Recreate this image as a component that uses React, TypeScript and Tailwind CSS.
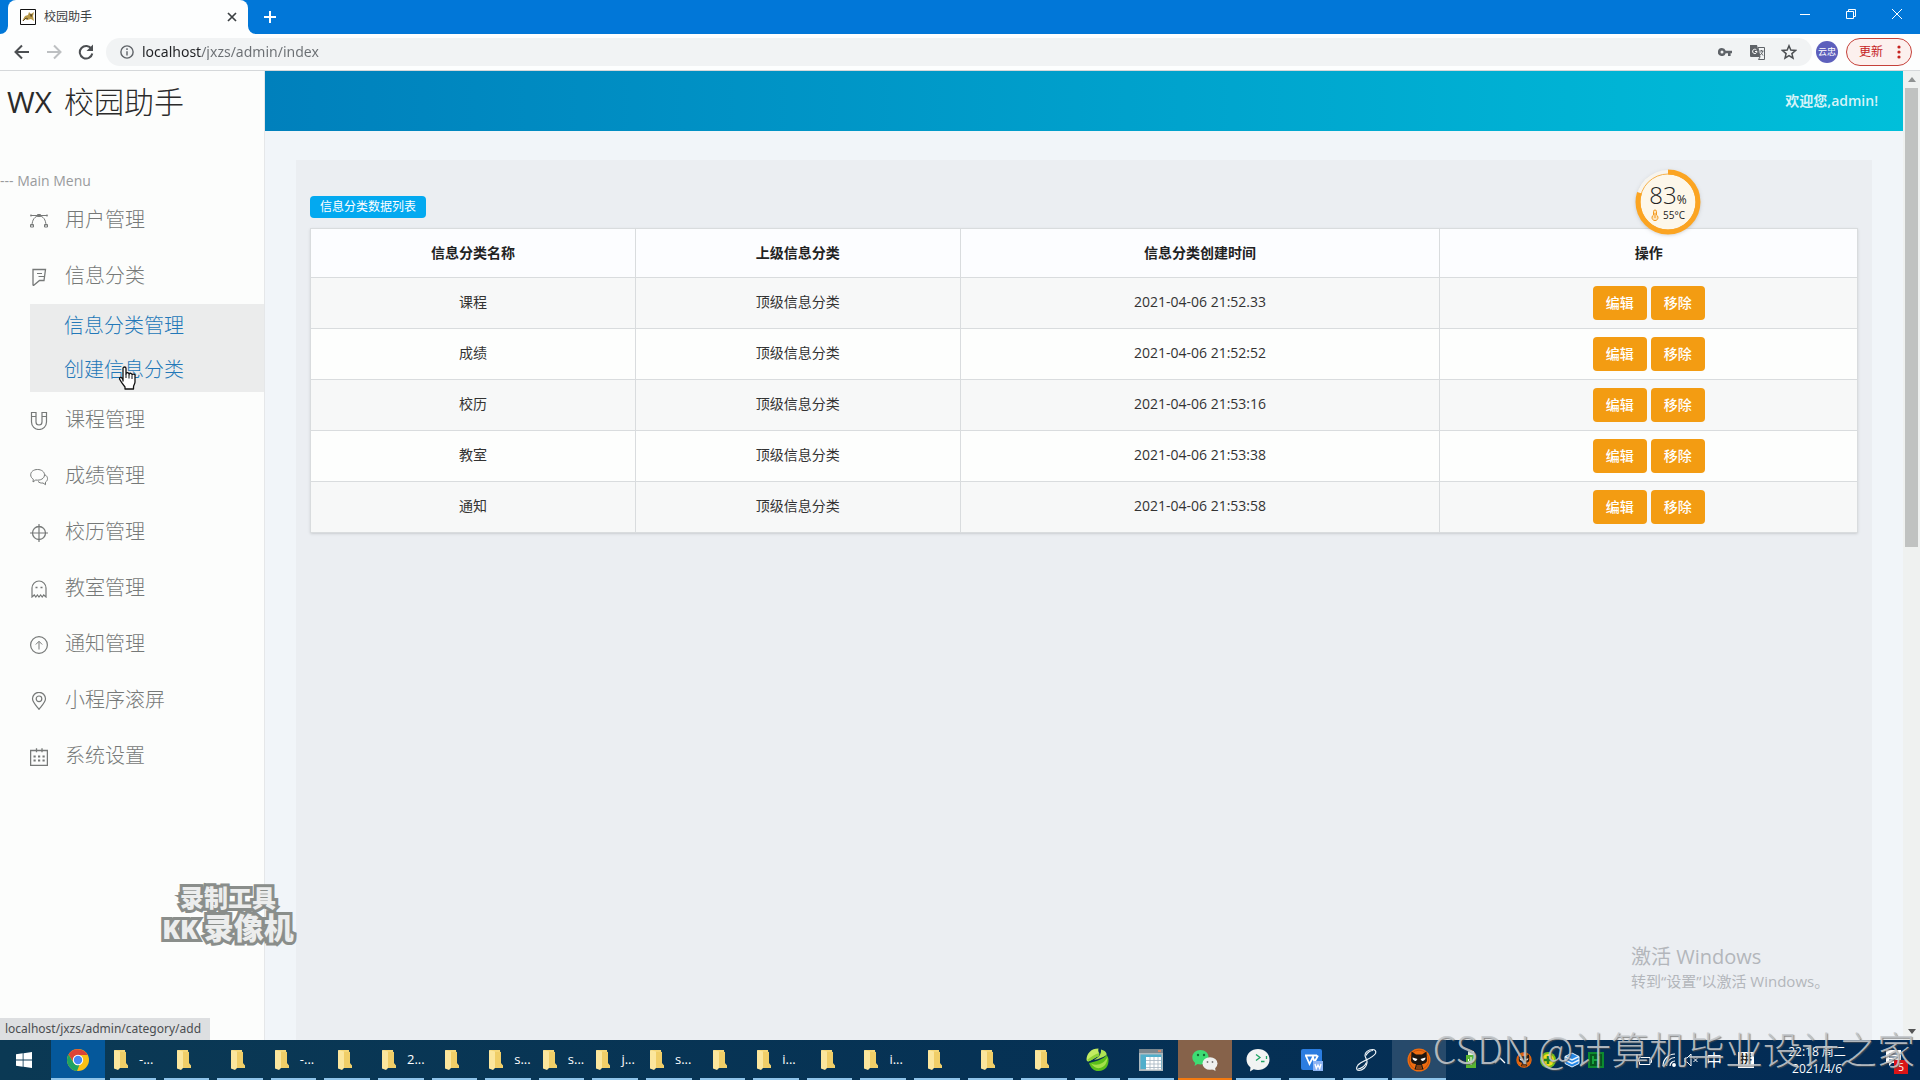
import React from "react";

type IconProps = { className?: string };

function Line({ children, className = "size-[18px]" }: { children: React.ReactNode; className?: string }) {
  return (
    <svg viewBox="0 0 18 18" className={className} fill="none" stroke="currentColor" strokeWidth="1" aria-hidden="true">
      {children}
    </svg>
  );
}

const VectorIcon = () => (
  <Line>
    <path d="M1 3.500h16M2 14C2 7.500 5 4 9 4s7 3.500 7 10" />
    <path d="M7.500 2.500h3v2h-3zM.5 12.500h3v2.500h-3zM14.500 12.500h3v2.500h-3z" />
    <circle cx="1" cy="3.500" r=".7" />
    <circle cx="17" cy="3.500" r=".7" />
  </Line>
);
const FlagIcon = () => (
  <Line>
    <path d="M3 1.500h12.500l-1.500 11H9.500L3.500 17.500 3 17z" strokeWidth="1.300" />
    <path d="M7 5.500h5M8.500 8.500h6" strokeWidth="1.200" />
  </Line>
);
const MagnetIcon = () => (
  <Line>
    <path d="M1.500.5h4.500v9.500a3 3 0 0 0 6 0V.5h4.500v9.500a7.500 7.500 0 0 1-15 0zM1.500 4.500h4.500M12 4.500h4.500" strokeWidth="1.200" />
  </Line>
);
const ChatIcon = () => (
  <Line>
    <path d="M7.500 1.500C3.500 1.500.7 3.800.7 6.800c0 2 1 3.400 2.600 4.400L3 14l2.700-2c4.800.8 8.800-1.500 8.800-5.200C14.500 3.800 11.500 1.500 7.500 1.500z" />
    <path d="M15 6.800c3.300 1.800 3.200 5.600.5 7.300v2.600l-2.500-1.700c-2 .3-3.800-.3-5-1.600" />
  </Line>
);
const TargetIcon = () => (
  <Line>
    <circle cx="9" cy="9" r="6.500" strokeWidth="1.300" />
    <path d="M9 0v18M0 9h18" strokeWidth="1.200" />
  </Line>
);
const GhostIcon = () => (
  <Line>
    <path d="M2 17V8a7 7 0 0 1 14 0v9l-2.300-2-1.500 2-1.600-2L9 17l-1.600-2-1.600 2-1.500-2z" strokeWidth="1.200" />
    <path d="M5.500 7.500h2M10.500 7.500h2" strokeWidth="1.500" />
  </Line>
);
const UpIcon = () => (
  <Line>
    <circle cx="9" cy="9" r="8.400" strokeWidth="1.200" />
    <path d="M9 13.500V5.500M5.800 8.500 9 5.300l3.200 3.200" />
  </Line>
);
const PinIcon = () => (
  <Line>
    <path d="M9 17.300C5.500 13 2.500 10 2.500 6.800a6.500 6.500 0 0 1 13 0c0 3.200-3 6.200-6.500 10.500z" strokeWidth="1.200" />
    <circle cx="9" cy="6.800" r="2.800" strokeWidth="1.200" />
  </Line>
);
const CalendarIcon = () => (
  <Line>
    <path d="M.6 2.500h16.800v14.800H.6zM6.500.3v4M12 .3v4" strokeWidth="1.300" />
    <path d="M3.500 8.500h2.200M8 8.500h2.200M12.500 8.500h2.200M3.500 12.500h2.200M8 12.500h2.200M12.500 12.500h2.200" strokeWidth="2" />
  </Line>
);

const menu = [
  { label: "用户管理", icon: <VectorIcon /> },
  { label: "信息分类", icon: <FlagIcon />, children: ["信息分类管理", "创建信息分类"] },
  { label: "课程管理", icon: <MagnetIcon /> },
  { label: "成绩管理", icon: <ChatIcon /> },
  { label: "校历管理", icon: <TargetIcon /> },
  { label: "教室管理", icon: <GhostIcon /> },
  { label: "通知管理", icon: <UpIcon /> },
  { label: "小程序滚屏", icon: <PinIcon /> },
  { label: "系统设置", icon: <CalendarIcon /> },
];

const rows = [
  ["课程", "2021-04-06 21:52.33"],
  ["成绩", "2021-04-06 21:52:52"],
  ["校历", "2021-04-06 21:53:16"],
  ["教室", "2021-04-06 21:53:38"],
  ["通知", "2021-04-06 21:53:58"],
];

function TitleBar() {
  return (
    <div className="flex h-[34px] shrink-0 items-end bg-[#0177d8] text-white">
      <div className="relative ml-2 flex h-full w-60 items-center rounded-t-lg bg-[#fdfefe] pr-[11px] pl-3 text-[#3c4043]">
        <svg viewBox="0 0 16 16" className="size-4" aria-hidden="true">
          <path d="M.5.5h15v15H.5z" fill="#fff" stroke="#111" />
          <path d="M2 12l3-5 3-1 1-3 2 2 3-2-1 4 1 5-3-2-4 1-2-1z" fill="#b99a4a" />
          <path d="M3 12l3-3 2 1M10 5l1 2M12 5l-1 3" stroke="#5d4a25" fill="none" />
        </svg>
        <span className="ml-2 flex-1 text-xs">校园助手</span>
        <button aria-label="关闭标签页">
          <svg viewBox="0 0 10 10" className="size-[10px]" stroke="#3c4043" strokeWidth="1.700" aria-hidden="true">
            <path d="M1 1l8 8M9 1 1 9" />
          </svg>
        </button>
        <svg viewBox="0 0 8 8" className="absolute bottom-0 -left-2 size-2" fill="#fdfefe" aria-hidden="true">
          <path d="M8 0v8H0a8 8 0 0 0 8-8z" />
        </svg>
        <svg viewBox="0 0 8 8" className="absolute -right-2 bottom-0 size-2" fill="#fdfefe" aria-hidden="true">
          <path d="M0 0v8h8a8 8 0 0 1-8-8z" />
        </svg>
      </div>
      <button aria-label="新标签页" className="flex h-full w-11 items-center justify-center">
        <svg viewBox="0 0 12 12" className="size-3" stroke="white" strokeWidth="2" aria-hidden="true">
          <path d="M6 0v12M0 6h12" />
        </svg>
      </button>
      <div className="ml-auto flex h-7 self-start">
        <button aria-label="最小化" className="flex w-[46px] items-center justify-center">
          <svg viewBox="0 0 10 10" className="size-[10px]" stroke="white" aria-hidden="true"><path d="M0 5.500h10" /></svg>
        </button>
        <button aria-label="还原" className="flex w-[46px] items-center justify-center">
          <svg viewBox="0 0 10 10" className="size-[10px]" fill="none" stroke="white" aria-hidden="true"><path d="M.5 2.500h7v7h-7zM2.500 2.500v-2h7v7h-2" /></svg>
        </button>
        <button aria-label="关闭" className="flex w-[46px] items-center justify-center">
          <svg viewBox="0 0 10 10" className="size-[10px]" stroke="white" aria-hidden="true"><path d="M0 0l10 10M10 0 0 10" /></svg>
        </button>
      </div>
    </div>
  );
}

function Toolbar() {
  return (
    <div className="flex h-[37px] shrink-0 items-center border-b border-[#d5d8da] bg-[#fdfefe] text-[#5f6368]">
      <button aria-label="后退" className="ml-[14px]">
        <svg viewBox="0 0 16 16" className="size-4" fill="none" stroke="#4c4f52" strokeWidth="2" aria-hidden="true"><path d="M15 8H2M8 1.500 1.500 8 8 14.500" /></svg>
      </button>
      <button aria-label="前进" className="ml-4">
        <svg viewBox="0 0 16 16" className="size-4" fill="none" stroke="#bdc0c2" strokeWidth="2" aria-hidden="true"><path d="M1 8h13M8 1.500 14.500 8 8 14.500" /></svg>
      </button>
      <button aria-label="重新加载" className="ml-4">
        <svg viewBox="0 0 16 16" className="size-4" fill="none" stroke="#4c4f52" strokeWidth="2" aria-hidden="true">
          <path d="M13.500 5A6.300 6.300 0 1 0 14.300 9.500" />
          <path d="M15 0.500V7H8.500z" fill="#4c4f52" stroke="none" />
        </svg>
      </button>
      <div className="ml-3 flex h-7 flex-1 items-center gap-2 rounded-full bg-[#f1f3f4] pr-[15px] pl-[14px]">
        <svg viewBox="0 0 16 16" className="size-[14px]" fill="none" stroke="#5f6368" strokeWidth="1.600" aria-hidden="true">
          <circle cx="8" cy="8" r="7" /><path d="M8 7v5M8 3.800v1.800" />
        </svg>
        <input
          aria-label="地址栏"
          readOnly
          value="localhost/jxzs/admin/index"
          className="h-[22px] min-w-0 flex-1 self-start bg-[linear-gradient(to_right,#202124_60px,#6b6f73_60px)] bg-clip-text pt-1 font-['Noto_Sans'] text-sm text-transparent outline-none"
        />
        <button aria-label="密码">
          <svg viewBox="0 0 14 8" className="h-2 w-[14px]" fill="#5f6368" aria-hidden="true">
            <path fillRule="evenodd" d="M4 0a4 4 0 1 0 3.700 5.200H10V8h2.600V5.200H14V2.700H7.700A4 4 0 0 0 4 0zm0 2.500a1.500 1.500 0 1 1 0 3 1.500 1.500 0 0 1 0-3z" />
          </svg>
        </button>
        <button aria-label="翻译" className="ml-[10px]">
          <svg viewBox="0 0 15 15" className="size-[15px]" aria-hidden="true">
            <path d="M0 0h7l3 12H1a1 1 0 0 1-1-1z" fill="#5f6368" />
            <path d="M8 2.500h6.500v12H8.500L10 12z" fill="none" stroke="#5f6368" />
            <path d="M6.500 5A2.200 2.200 0 1 0 7 6.500H5" fill="none" stroke="#fff" />
            <path d="M9.500 6h4M11.500 5v1M12.800 6c-.4 2-1.500 3-2.600 3.800M10.800 7.500l2.200 3" fill="none" stroke="#5f6368" />
          </svg>
        </button>
        <button aria-label="收藏" className="ml-2">
          <svg viewBox="0 0 16 16" className="size-4" fill="none" stroke="#4c4f52" strokeWidth="1.500" aria-hidden="true">
            <path d="M8 1.800l1.800 4.300 4.700.4-3.600 3.100 1.100 4.600L8 11.700l-4 2.500 1.100-4.600L1.500 6.500l4.700-.4z" />
          </svg>
        </button>
      </div>
      <button className="ml-1 flex size-[22px] items-center justify-center rounded-full bg-[#5c5fbc] text-[9px] whitespace-nowrap text-white">云忠</button>
      <button className="mr-2 ml-2 flex h-7 w-[66px] items-center justify-between rounded-full border border-[#c5413a] bg-[#fcf0ee] pr-[10px] pl-3 text-xs text-[#c5221f]">
        更新
        <svg viewBox="0 0 4 14" className="h-[14px] w-1" fill="#c5221f" aria-hidden="true">
          <circle cx="2" cy="2" r="1.600" /><circle cx="2" cy="7" r="1.600" /><circle cx="2" cy="12" r="1.600" />
        </svg>
      </button>
    </div>
  );
}

function HandCursor({ className }: IconProps) {
  return (
    <svg viewBox="0 0 18 24" className={className} fill="#fff" stroke="#111" strokeWidth="1.300" strokeLinejoin="round" aria-hidden="true">
      <path d="M5 15V2.500a1.500 1.500 0 0 1 3 0V8a1.500 1.500 0 0 1 3 .5 1.500 1.500 0 0 1 3 .7 1.500 1.500 0 0 1 3 1V16c0 2-1.500 3-1.500 5v2H7v-2c-2-2.500-4-5-5.500-8 0-2 1.500-2 2.500-1L5 14z" />
      <path d="M8 8v4M11 9v3.500M14 10v3" fill="none" strokeWidth="1" />
    </svg>
  );
}

function Sidebar() {
  return (
    <aside className="relative w-[265px] shrink-0 border-r border-[#e5e7e9] bg-[#fcfdfc] font-light">
      <h1 className="flex h-[60px] items-center pl-[7px] text-[30px] text-[#2b2b2b]">
        <span className="mr-3 font-normal">WX</span>校园助手
      </h1>
      <p className="mt-[39px] h-[22px] text-sm leading-[22px] font-normal text-[#999b9c]">--- Main Menu</p>
      <nav>
        <ul>
          {menu.map((item) => (
            <li key={item.label}>
              <a href="#" className="flex h-14 items-center pl-[30px] text-xl text-[#767978]">
                <span className="mt-[2px] mr-[17px]">{item.icon}</span>
                {item.label}
              </a>
              {item.children && (
                <ul className="ml-[30px] bg-[#ebecec]">
                  {item.children.map((c) => (
                    <li key={c}>
                      <a href="#" className="flex h-11 items-center pl-[34px] text-xl text-[#2378b8]">{c}</a>
                    </li>
                  ))}
                </ul>
              )}
            </li>
          ))}
        </ul>
      </nav>
      <HandCursor className="absolute top-[295px] left-[118px] h-6 w-[18px]" />
      <div className="pointer-events-none absolute right-[-32px] bottom-[95px] w-[136px] text-center font-black whitespace-nowrap text-[#eceded] [paint-order:stroke] [-webkit-text-stroke:6px_#8a8e8b]">
        <div className="text-2xl leading-7">录制工具</div>
        <div className="text-[30px] leading-8"><span className="mr-[6px] text-[26px]">KK</span>录像机</div>
      </div>
    </aside>
  );
}

const actionClass = "h-[34px] w-[54px] rounded bg-[#f39c12] text-sm font-medium text-white";
const cellClass = "border border-[#d9dcde] pb-[2px]";

function CategoryTable() {
  return (
    <table className="mt-[10px] w-full table-fixed border-collapse border border-[#d9dcde] text-center text-sm text-[#333] shadow-sm">
      <colgroup>
        <col className="w-[21%]" />
        <col className="w-[21%]" />
        <col className="w-[31%]" />
        <col className="w-[27%]" />
      </colgroup>
      <thead>
        <tr className="h-[49px] bg-[#fcfdff] text-[#222]">
          {["信息分类名称", "上级信息分类", "信息分类创建时间", "操作"].map((h) => (
            <th key={h} className="border border-[#d9dcde] font-bold">{h}</th>
          ))}
        </tr>
      </thead>
      <tbody>
        {rows.map(([name, time]) => (
          <tr key={name} className="h-[51px] bg-[#fdfefd] odd:bg-[#f7f8f8]">
            <td className={cellClass}>{name}</td>
            <td className={cellClass}>顶级信息分类</td>
            <td className={cellClass}>{time}</td>
            <td className="border border-[#d9dcde]">
              <div className="flex justify-center gap-1">
                <button className={actionClass}>编辑</button>
                <button className={actionClass}>移除</button>
              </div>
            </td>
          </tr>
        ))}
      </tbody>
    </table>
  );
}

function Gauge() {
  return (
    <div className="absolute top-[169px] right-[219px] size-[66px]">
      <svg viewBox="0 0 66 66" className="size-full drop-shadow" fill="none" aria-hidden="true">
        <circle cx="33" cy="33" r="32" fill="#f7f4ee" />
        <circle cx="33" cy="33" r="28" fill="#fdf7ea" stroke="#f6b24c" strokeWidth="1" />
        <circle cx="33" cy="33" r="30" stroke="#fba422" strokeWidth="5" pathLength="100" strokeDasharray="80 20" transform="rotate(-90 33 33)" />
      </svg>
      <div className="absolute inset-0 flex flex-col items-center pt-[12px] text-[#222]">
        <div className="flex items-baseline text-2xl leading-7 font-light">83<span className="text-xs font-normal">%</span></div>
        <div className="flex items-center gap-1 text-[10px] leading-3">
          <svg viewBox="0 0 8 12" className="h-3 w-2" fill="#fde3b8" stroke="#f39a1e" aria-hidden="true">
            <path d="M2.500 6V2.500a1.500 1.500 0 0 1 3 0V6a3 3 0 1 1-3 0zM4 4v5" />
          </svg>
          55°C
        </div>
      </div>
    </div>
  );
}

function Scrollbar() {
  return (
    <div className="flex w-[17px] shrink-0 flex-col items-center bg-[#eff1f0] pt-[6px] pb-[6px]">
      <svg viewBox="0 0 8 5" className="h-[5px] w-2 shrink-0" fill="#8f9292" aria-hidden="true"><path d="M4 0l4 5H0z" /></svg>
      <div className="mt-[6px] h-[48%] w-[13px] bg-[#c0c2c1]" />
      <svg viewBox="0 0 8 5" className="mt-auto h-[5px] w-2 shrink-0" fill="#555" aria-hidden="true"><path d="M4 5 0 0h8z" /></svg>
    </div>
  );
}

const FolderIcon = () => (
  <svg viewBox="0 0 14 20" className="h-5 w-[14px] shrink-0" aria-hidden="true">
    <path d="M1 0h10l1 14 2 1.500V18H1z" fill="#f5d778" />
    <path d="M6 2h6v11l1.500 2v3H6z" fill="#f0ce68" />
    <path d="M0 0l6 1.500V18l-2 2-4-1.500z" fill="#fbe69d" />
  </svg>
);
const ChromeIcon = () => (
  <svg viewBox="0 0 24 24" className="size-6" aria-hidden="true">
    <circle cx="12" cy="12" r="11" fill="#fbc116" />
    <path d="M2.500 6.500A11 11 0 0 1 21.600 7H12a5 5 0 0 0-4.800 6.400z" fill="#dc4437" />
    <path d="M2.500 6.500l5 8A5 5 0 0 0 13.500 16.800L11 23A11 11 0 0 1 2.500 6.500z" fill="#1da362" />
    <circle cx="12" cy="12" r="5.200" fill="#fff" />
    <circle cx="12" cy="12" r="4.200" fill="#4587f3" />
  </svg>
);
const LeafIcon = () => (
  <svg viewBox="0 0 24 24" className="size-6" aria-hidden="true">
    <path d="M3 15C5 21 9 23.500 13 23c6 0 10-5 9.500-11.500-.2-2-1-3.500-2-4.500-3 4-9 6-17.500 8z" fill="#5cbf1b" />
    <path d="M5 15.500c6 3 13 .5 16.500-6.500 0 6-3 10-7.500 11-4 .8-7-1.500-9-4.500z" fill="#a4e04a" />
    <path d="M.500 11C1 5.500 5 .5 12.500.5 11.500 4 14 4.500 13 8 9 9 6 12.500 2.500 13.500c-1.300.3-2-1-2-2.500z" fill="#c3ec62" />
    <path d="M2.500 13c4-.5 6.500-4 10.500-5l.3-3C9 6 5 9 1 12z" fill="#8ed436" />
    <path d="M15 1.500c4 1 6 3 5.500 5.500C17 9.500 12.500 11 8 12c4-2.500 7.500-5 7-10.500z" fill="#b0e454" />
  </svg>
);
const SheetIcon = () => (
  <svg viewBox="0 0 24 24" className="size-6" aria-hidden="true">
    <path d="M0 1h24v22H0z" fill="#aeb8bd" />
    <path d="M0 1h24v4H0z" fill="#7d888f" />
    <path d="M19 2h3v2h-3z" fill="#d5896c" />
    <path d="M1.500 6.500h21V21h-21z" fill="#51aecb" />
    <path d="M7 9h15v12.500H7z" fill="#fff" />
    <path d="M7 12.500h15M7 16h15M7 19.500h15M11 9v12.500M15 9v12.500M19 9v12.500" stroke="#a5b4c2" strokeWidth=".8" />
  </svg>
);
const WeChatIcon = () => (
  <svg viewBox="0 0 26 24" className="h-6 w-[26px]" aria-hidden="true">
    <path d="M8.500 2C13 2 16.500 5 16.500 9s-3.500 7.500-8 7.500c-1 0-2-.1-3-.4L2.500 18l.7-3C1.500 13.500.3 11.500.3 9.200.3 5.200 4 2 8.500 2z" fill="#3ddc73" />
    <ellipse cx="18" cy="15.500" rx="7.500" ry="6.300" fill="#eef0ef" />
    <path d="M20 21l3.500 2-.5-4z" fill="#eef0ef" />
    <circle cx="6" cy="7" r="1.200" fill="#146b35" /><circle cx="12" cy="7" r="1.200" fill="#146b35" />
    <circle cx="15.500" cy="14" r=".9" fill="#777" /><circle cx="20.500" cy="14" r=".9" fill="#777" />
  </svg>
);
const DevChatIcon = () => (
  <svg viewBox="0 0 24 24" className="size-6" fill="none" aria-hidden="true">
    <path d="M12 1c6.500 0 11.500 4.500 11.500 10.500S18.500 22 12 22c-1.500 0-3-.2-4.300-.7L4 23.500l.5-4C2 17.500.5 14.800.5 11.500.5 5.500 5.500 1 12 1z" fill="#f2f4f3" />
    <path d="M10 6.500l4 3-4 3M15 13.500h3.500M20.500 8v3" stroke="#1fa463" strokeWidth="1.300" />
  </svg>
);
const WpsIcon = () => (
  <svg viewBox="0 0 24 24" className="size-6" fill="none" aria-hidden="true">
    <rect x="1" y="1" width="21" height="21" rx="2" fill="#2b7de1" />
    <path d="M5 7.500h12M6 8l3.500 8L13 9l1.500 5L18 7.500" stroke="#fff" strokeWidth="1.800" />
    <path d="M13 13h10v10H13z" fill="#8db4f4" />
    <path d="M15 16l1.300 4.500L18 17l1.700 3.500L21 16" stroke="#fff" strokeWidth="1.300" />
  </svg>
);
const LoopIcon = () => (
  <svg viewBox="0 0 22 24" className="h-6 w-[22px]" fill="none" stroke="#eef4f8" strokeWidth="1.200" aria-hidden="true">
    <path d="M20.500 5.500c1-2.500-.5-4-3-4-4 0-8 3-7.500 6 .3 2.500 2.500 4 2 7.500-.5 4-4.500 7.500-8 7.500-3 0-3-3-1-5.500 4-4.500 14-6 17.500-11.500z" />
    <path d="M11 7.500c1-2.500 4-5 7-5M3 21c3 0 7-3 8.500-6.500" />
  </svg>
);
const CatIcon = ({ className = "size-6" }: IconProps) => (
  <svg viewBox="0 0 24 24" className={className} aria-hidden="true">
    <circle cx="12" cy="12" r="11.500" fill="#ef6d10" />
    <circle cx="12" cy="12" r="9.800" fill="none" stroke="#c9540a" />
    <path d="M4.500 3.500L9 6.500h6l4.500-3 .5 8.500c0 3-3 4-5 4l1.500 5.500h-9L9 16c-2 0-5-1-5-4z" fill="#1d1712" />
    <path d="M5.500 9.500l5 1.500-1.500 2c-2 0-3.500-1.500-3.500-3.500zM18.500 9.500l-5 1.500 1.500 2c2 0 3.500-1.500 3.500-3.500z" fill="#fff" />
    <path d="M9.500 18h5M9 20h6" stroke="#ef6d10" />
  </svg>
);

type Task = { label?: string; icon?: React.ReactNode; look?: "active" | "lit" };
const tasks: Task[] = [
  { label: "-..." }, {}, {}, { label: "-..." }, {}, { label: "2..." }, {}, { label: "s..." }, { label: "s..." },
  { label: "j..." }, { label: "s..." }, {}, { label: "i..." }, {}, { label: "i..." }, {}, {}, {},
  { icon: <LeafIcon /> }, { icon: <SheetIcon /> }, { icon: <WeChatIcon />, look: "active" }, { icon: <DevChatIcon /> },
  { icon: <WpsIcon /> }, { icon: <LoopIcon /> }, { icon: <CatIcon />, look: "lit" },
];

function Taskbar() {
  return (
    <footer className="flex h-10 shrink-0 bg-linear-to-r from-[#0b3954] to-[#032b55] text-white">
      <button aria-label="开始" className="flex w-[51px] items-center justify-center pr-[3px]">
        <svg viewBox="0 0 16 16" className="size-4" fill="#fff" aria-hidden="true">
          <path d="M0 2.200 6.700 1.300v6.300H0zM7.500 1.200 16 0v7.600H7.500zM0 8.400h6.700v6.300L0 13.800zM7.500 8.400H16V16l-8.500-1.200z" />
        </svg>
      </button>
      <button aria-label="Chrome" className="flex w-[54px] items-center justify-center border-b-2 border-[#8fc4ea] bg-[#05589b] pt-[2px]"><ChromeIcon /></button>
      <div className="ml-px grid min-w-0 flex-1 grid-cols-[repeat(25,minmax(0,1fr))]">
        {tasks.map((t, i) => {
          const look = t.look === "active" ? "bg-[#86624a]" : t.look === "lit" ? "bg-[#274a6b]" : "";
          const bar = t.look === "active" ? "border-[#f57a10]" : t.look === "lit" ? "border-[#8fc4ea]" : "mx-1 border-[#8fc4ea]";
          const place = t.label ? "gap-[11px] pl-1" : t.icon ? "justify-center" : "justify-center pr-1";
          return (
            <button key={i} aria-label={t.label ? undefined : "任务 " + (i + 1)} className={look}>
              <span className={"flex h-10 items-center border-b-2 pt-[2px] text-[13px] " + bar + " " + place}>
                {t.icon ?? <FolderIcon />}
                {t.label}
              </span>
            </button>
          );
        })}
      </div>
      <div className="flex w-[474px] items-center pl-[19px]">
        <svg viewBox="0 0 12 18" className="h-[18px] w-3" aria-hidden="true">
          <path d="M3 0h6v4H3z" fill="#e5eee0" /><path d="M1 4h10v13H1z" fill="#58b531" />
          <path d="M6 6v8M3.500 8v2L6 12l2.500-2V8" fill="none" stroke="#fff" />
        </svg>
        <svg viewBox="0 0 12 8" className="ml-[17px] h-2 w-3" fill="none" stroke="#fff" strokeWidth="1.300" aria-hidden="true"><path d="M1 7l5-5 5 5" /></svg>
        <CatIcon className="ml-[10px] size-4" />
        <svg viewBox="0 0 16 16" className="ml-2 size-4" aria-hidden="true">
          <circle cx="8" cy="8" r="8" fill="#79c31c" /><circle cx="8" cy="8" r="6" fill="#f6dd21" /><path d="M8 4v8M4 8h8" stroke="#27871c" strokeWidth="2.500" />
        </svg>
        <svg viewBox="0 0 16 16" className="ml-2 size-4" aria-hidden="true">
          <path d="M8 1l7 3.500v7L8 15l-7-3.500v-7z" fill="#2487e6" stroke="#e7f2fc" /><path d="M1 4.500 8 8l7-3.500M1 8l7 3.500L15 8" fill="none" stroke="#e7f2fc" strokeWidth="1.400" />
        </svg>
        <svg viewBox="0 0 16 16" className="ml-2 size-4" fill="none" aria-hidden="true">
          <path d="M1 1h14v14H1z" fill="#06561d" stroke="#0d8a2f" strokeWidth="2" /><path d="M5 4v8M11 4v8M5 8h6" stroke="#17a33d" strokeWidth="2" />
        </svg>
        <svg viewBox="0 0 16 14" className="ml-8 h-[14px] w-4" fill="none" stroke="#fff" aria-hidden="true">
          <path d="M5 4.500h9v7H3.500V8M14.500 6.500h1v3h-1M1 1v4h3V1M2.500 5v4" />
        </svg>
        <svg viewBox="0 0 14 14" className="ml-[10px] size-[14px]" fill="none" stroke="#fff" strokeWidth="1.200" aria-hidden="true">
          <path d="M1 13A12 12 0 0 1 13 1M4.500 13A8.500 8.500 0 0 1 13 4.500M8 13a5 5 0 0 1 5-5" /><circle cx="12" cy="12" r="1.300" fill="#fff" />
        </svg>
        <svg viewBox="0 0 14 14" className="ml-2 size-[14px]" fill="none" stroke="#fff" aria-hidden="true">
          <path d="M1 5h2l4-4v12L3 9H1zM9.500 5l4 4M13.500 5l-4 4" />
        </svg>
        <span className="ml-2 text-base leading-5">中</span>
        <span className="ml-4 flex size-4 items-center justify-center bg-white text-xs font-bold text-[#222]">拼</span>
        <div className="ml-[26px] w-[74px] text-center text-xs leading-[17px] whitespace-nowrap">
          <div>22:18 周二</div>
          <div>2021/4/6</div>
        </div>
        <div className="relative ml-8 h-5 w-[22px]">
          <svg viewBox="0 0 16 16" className="size-4" aria-hidden="true"><path d="M0 0h15v13H6l-3 3v-3H0z" fill="#fff" /><path d="M3 4h9M3 7h9M3 10h6" stroke="#1b3656" /></svg>
          <span className="absolute right-0 -bottom-1 flex h-[14px] w-[14px] items-center justify-center bg-[#dc1416] text-[10px]">5</span>
        </div>
      </div>
    </footer>
  );
}

export default function App() {
  return (
    <div className="relative flex h-screen flex-col overflow-hidden bg-[#f1f5f9] font-['Open_Sans','Noto_Sans_CJK_SC',sans-serif]">
      <TitleBar />
      <Toolbar />
      <div className="relative flex min-h-0 flex-1">
        <Sidebar />
        <div className="flex min-w-0 flex-1 flex-col">
          <header className="flex h-[60px] shrink-0 items-center justify-end bg-linear-to-r from-[#0080bc] to-[#00bfda] pr-[25px] text-sm font-semibold text-[#d5f3f8]">
            欢迎您,admin!
          </header>
          <main className="mx-[31px] mt-[29px] flex-1 bg-[#ebeef2] px-[14px] pt-9">
            <span className="block h-[22px] w-fit rounded bg-[#03a9f0] px-[10px] text-xs leading-[22px] text-white">信息分类数据列表</span>
            <CategoryTable />
          </main>
        </div>
        <Scrollbar />
        <div className="absolute bottom-0 left-0 h-[22px] bg-[#dddfe1] pr-[9px] pl-[5px] font-['Noto_Sans'] text-xs leading-[22px] text-[#4a4d50]">
          localhost/jxzs/admin/category/add
        </div>
        <div className="pointer-events-none absolute right-[94px] bottom-[49px] w-[195px] whitespace-nowrap text-[#b3b6bb]">
          <div className="text-xl leading-7">激活 Windows</div>
          <div className="text-[15px] leading-5">转到“设置”以激活 Windows。</div>
        </div>
      </div>
      <Taskbar />
      <Gauge />
      <div className="pointer-events-none absolute right-[5px] bottom-1 font-['Noto_Sans_CJK_SC',sans-serif] text-[38px] leading-[56px] font-light whitespace-nowrap text-[#c3c7cb]/90 [text-shadow:1px_1px_1px_#555a]">
        CSDN @计算机毕业设计之家
      </div>
    </div>
  );
}
